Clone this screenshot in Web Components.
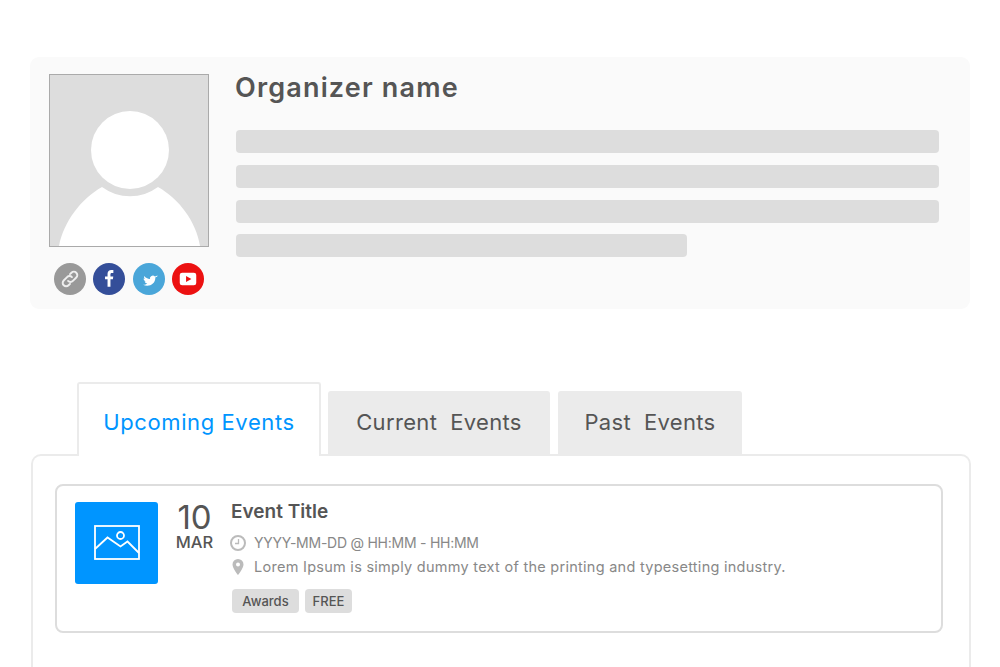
<!DOCTYPE html>
<html>
<head>
<meta charset="utf-8">
<style>
  html, body { margin: 0; background: #fff; height: 100%; overflow: hidden; }
  body { font-family: Inter, "Noto Sans", sans-serif; color: #555; }
</style>
</head>
<body>
<organizer-page></organizer-page>
<script>
class SocialLink extends HTMLElement {
  constructor() {
    super();
    const icons = {
      link: '<g fill="none" stroke="#eee" stroke-width="2" stroke-linecap="round"><path d="M14.500 18.500a3.500 3.500 0 0 0 5 0l3.500-3.500a3.500 3.500 0 0 0-5-5l-1.500 1.500"/><path d="M18.500 14.500a3.500 3.500 0 0 0-5 0l-3.500 3.500a3.500 3.500 0 0 0 5 5l1.500-1.500"/></g>',
      facebook: '<path fill="#fff" d="M18 24.500v-7.700h2.500l.4-3h-2.900v-1.900c0-.9.3-1.500 1.500-1.500h1.500V7.200c-.3 0-1.200-.1-2.200-.1-2.200 0-3.800 1.400-3.800 3.900v2.800h-2.600v3h2.600v7.700z"/>',
      twitter: '<path fill="#fff" transform="translate(0 2)" d="M25 12.300c-.6.2-1.200.4-1.800.4.6-.3 1.100-.9 1.300-1.500-.6.3-1.200.6-1.900.7a3 3 0 0 0-5.100 2.700c-2.400-.1-4.600-1.300-6-3.100-.3 1.100 0 2.200.7 3-.5 0-.9-.2-1.300-.4 0 1.400.9 2.600 2.400 3-.4.1-.9.100-1.300 0 .4 1.200 1.500 2 2.800 2-1.300 1-2.900 1.400-4.400 1.300 5 2.700 12.700.4 12.700-7.600.5-.4 1.500-1.500 1.900-2.500z"/>',
      youtube: '<path fill="#fff" d="M10.500 10h12a2.500 2.500 0 0 1 2.500 2.500v8a2.500 2.500 0 0 1-2.500 2.500h-12A2.500 2.500 0 0 1 8 20.500v-8A2.500 2.500 0 0 1 10.500 10z"/><path fill="#ec1111" d="M14.500 13.500l5.500 3-5.500 3z"/>'
    };
    const colors = { link: "#999", facebook: "#344e99", twitter: "#4aa6d9", youtube: "#ec1111" };
    const kind = this.getAttribute("kind");
    this.attachShadow({ mode: "open" }).innerHTML = `
      <style>
        :host { display: block; width: 32px; height: 32px; }
        svg { display: block; }
      </style>
      <svg width="32" height="32" viewBox="0 0 33 33"><circle cx="16.500" cy="16.500" r="16.500" fill="${colors[kind]}"/>${icons[kind]}</svg>`;
  }
}
customElements.define("social-link", SocialLink);

class OrganizerCard extends HTMLElement {
  constructor() {
    super();
    this.attachShadow({ mode: "open" }).innerHTML = `
      <style>
        :host { display: flex; box-sizing: border-box; width: 940px; height: 252px; margin-left: 30px;
                padding: 17px 31px 0 19px; background: #fafafa; border-radius: 9px; }
        .left { width: 160px; flex: none; }
        .photo { display: block; box-sizing: border-box; width: 160px; height: 173px; border: 1px solid #aaa; background: #ddd; }
        .links { display: flex; gap: 7.300px; padding: 16px 0 0 5px; }
        .right { flex: 1; padding-left: 26px; }
        h2 { margin: 0; height: 56px; font: 600 27px/28px Inter, "Noto Sans", sans-serif; color: #555; letter-spacing: 1.170px; }
        .lines { display: flex; flex-direction: column; gap: 12px; padding-left: 1px; }
        .bar { height: 23px; background: #ddd; border-radius: 4px; }
        .bar:last-child { width: 451px; margin-top: -1px; }
      </style>
      <div class="left">
        <svg class="photo" viewBox="0 0 158 171">
          <path fill="#fff" d="M9 171C14 146 31 124 52 112A47 47 0 0 0 108 112C129 124 146 146 150 171z"/>
          <circle cx="80" cy="75" r="39" fill="#fff"/>
        </svg>
        <div class="links">
          <social-link kind="link"></social-link>
          <social-link kind="facebook"></social-link>
          <social-link kind="twitter"></social-link>
          <social-link kind="youtube"></social-link>
        </div>
      </div>
      <div class="right">
        <h2><slot></slot></h2>
        <div class="lines">
          <div class="bar"></div><div class="bar"></div><div class="bar"></div><div class="bar"></div>
        </div>
      </div>`;
  }
}
customElements.define("organizer-card", OrganizerCard);

class EventTab extends HTMLElement {
  constructor() {
    super();
    this.attachShadow({ mode: "open" }).innerHTML = `
      <style>
        :host { display: flex; align-items: center; justify-content: center; box-sizing: border-box; height: 64px; padding-bottom: 2px;
                background: #ebebeb; border-radius: 3px 3px 0 0; font: 400 22px/30px Inter, "Noto Sans", sans-serif; color: #555;
                white-space: pre; letter-spacing: .33px; }
        :host([active]) { height: 74px; padding: 4px 0 0; margin-bottom: -1px; position: relative; z-index: 1; background: #fff;
                          border: 2px solid #ebebeb; border-bottom: 0; color: #0095ff; letter-spacing: .6px; }
      </style>
      <slot></slot>`;
  }
}
customElements.define("event-tab", EventTab);

class TagChip extends HTMLElement {
  constructor() {
    super();
    this.attachShadow({ mode: "open" }).innerHTML = `
      <style>
        :host { display: flex; align-items: center; justify-content: center; height: 24px; box-sizing: border-box; background: #ddd; border-radius: 4px;
                font: 500 13px/24px Inter, "Noto Sans", sans-serif; color: #555; }
      </style>
      <slot></slot>`;
  }
}
customElements.define("tag-chip", TagChip);

class EventCard extends HTMLElement {
  constructor() {
    super();
    this.attachShadow({ mode: "open" }).innerHTML = `
      <style>
        :host { display: flex; box-sizing: border-box; width: 888px; height: 149px; padding: 16px 0 0 18px;
                border: 2px solid #ddd; border-radius: 8px; background: #fff; }
        .thumb { display: flex; align-items: center; justify-content: center; flex: none; width: 83px; height: 82px; background: #0095ff; border-radius: 3px; }
        .date { flex: none; width: 73px; text-align: center; color: #555; }
        .day { font: 400 33px/30px Inter, "Noto Sans", sans-serif; }
        .month { font: 500 16.500px/18px Inter, "Noto Sans", sans-serif; margin-top: 1px; }
        .body { flex: 1; color: #888; }
        .title { font: 600 19px/22px Inter, "Noto Sans", sans-serif; color: #555; margin-top: -1px; }
        .row { display: flex; align-items: center; gap: 8px; height: 24px; margin-left: -1px; font: 400 14.500px/24px Inter, "Noto Sans", sans-serif; white-space: nowrap; letter-spacing: .27px; }
        .row svg { flex: none; }
        .first { margin-top: 8px; font-size: 14px; letter-spacing: -.25px; }
        .tags { display: flex; gap: 6px; margin-top: 10px; margin-left: 1px; }
        .a { width: 67px; } .b { width: 47px; }
      </style>
      <div class="thumb">
        <svg width="46" height="36" viewBox="0 0 46 36" fill="none" stroke="#fff" stroke-width="1.800">
          <rect x="1" y="1" width="44" height="33"/>
          <path d="M1 24L13.500 12.500 26.500 21.500 33.500 16.500 45 28"/>
          <circle cx="26.500" cy="10.500" r="3.500"/>
        </svg>
      </div>
      <div class="date">
        <div class="day">10</div>
        <div class="month">MAR</div>
      </div>
      <div class="body">
        <div class="title">Event Title</div>
        <div class="row first">
          <svg width="16" height="16" viewBox="0 0 16 16" fill="none" stroke="#bbb" stroke-width="2"><circle cx="8" cy="8" r="7"/><path stroke-width="1.300" d="M8.500 4v4.500H5"/></svg>
          <span>YYYY-MM-DD @ HH:MM - HH:MM</span>
        </div>
        <div class="row">
          <svg width="16" height="16" viewBox="0 0 16 16"><path fill="#bbb" fill-rule="evenodd" d="M8 0a5.500 5.500 0 0 0-5.500 5.500C2.500 9.500 8 16 8 16s5.500-6.500 5.500-10.500A5.500 5.500 0 0 0 8 0zm0 3.500a2 2 0 1 1 0 4 2 2 0 0 1 0-4z"/></svg>
          <span>Lorem Ipsum is simply dummy text of the printing and typesetting industry.</span>
        </div>
        <div class="tags">
          <tag-chip class="a">Awards</tag-chip>
          <tag-chip class="b">FREE</tag-chip>
        </div>
      </div>`;
  }
}
customElements.define("event-card", EventCard);

class OrganizerPage extends HTMLElement {
  constructor() {
    super();
    this.attachShadow({ mode: "open" }).innerHTML = `
      <style>
        :host { display: block; padding-top: 57px; }
        .tabs { display: flex; align-items: flex-end; margin: 73px 0 0 77px; }
        .tabs event-tab:nth-child(1) { width: 244px; }
        .tabs event-tab:nth-child(2) { width: 222px; margin-left: 7px; }
        .tabs event-tab:nth-child(3) { width: 184px; margin-left: 8px; }
        .panel { box-sizing: border-box; width: 940px; height: 213px; margin: -1px 0 0 31px; padding: 28px 0 0 22px;
                 border: 2px solid #ebebeb; border-bottom: 0; border-radius: 10px 10px 0 0; }
      </style>
      <organizer-card>Organizer name</organizer-card>
      <div class="tabs">
        <event-tab active>Upcoming Events</event-tab>
        <event-tab>Current  Events</event-tab>
        <event-tab>Past  Events</event-tab>
      </div>
      <div class="panel"><event-card></event-card></div>`;
  }
}
customElements.define("organizer-page", OrganizerPage);
</script>
</body>
</html>
